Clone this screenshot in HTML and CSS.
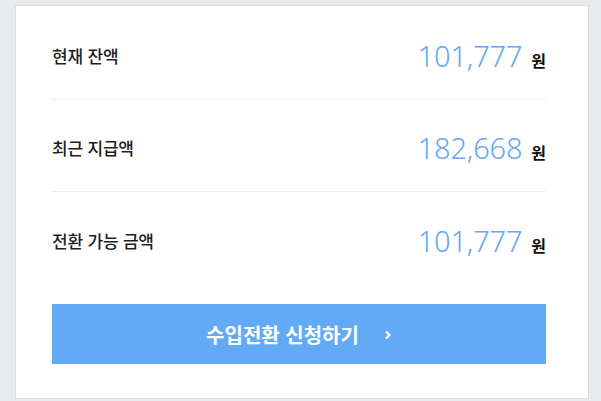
FILE: index.html
```html
<!DOCTYPE html>
<html lang="ko">
<head>
<meta charset="utf-8">
<link rel="stylesheet" href="styles.css">
</head>
<body>
<div class="card">
  <div class="row">
    <span class="label">현재 잔액</span>
    <span class="value"><span class="num">101,777</span><span class="unit">원</span></span>
  </div>
  <div class="row">
    <span class="label">최근 지급액</span>
    <span class="value"><span class="num">182,668</span><span class="unit">원</span></span>
  </div>
  <div class="row last">
    <span class="label">전환 가능 금액</span>
    <span class="value"><span class="num">101,777</span><span class="unit">원</span></span>
  </div>
  <button class="cta" type="button">
    <span>수입전환 신청하기</span>
    <svg class="chev" width="8" height="10" viewBox="0 0 8 10"><path d="M2 1.5 L5.5 5 L2 8.5" fill="none" stroke="#fff" stroke-width="2.2"/></svg>
  </button>
</div>
</body>
</html>
```
FILE: styles.css
```css
html, body { margin: 0; padding: 0; }
body {
  background: #e8ebee;
  width: 601px;
  height: 401px;
  font-family: "Noto Sans CJK KR", "Noto Sans", sans-serif;
  padding: 5px 12px 0 15px;
  box-sizing: border-box;
  overflow: hidden;
}
.card {
  background: #fff;
  border: 1px solid #d9dde1;
  width: 574px;
  height: 394px;
  box-sizing: border-box;
  padding: 2px 42px 0 36px;
  display: flex;
  flex-direction: column;
}
.row {
  height: 92px;
  display: flex;
  align-items: center;
  justify-content: space-between;
  border-bottom: 1px solid #eceef0;
  box-sizing: border-box;
  padding-top: 4px;
}
.row.last { border-bottom: none; }
.label {
  font-size: 17px;
  color: #1e1e1e;
  font-weight: 500;
  letter-spacing: -0.2px;
}
.value { display: flex; align-items: baseline; }
.num {
  font-family: "Noto Sans", sans-serif;
  font-size: 29px;
  color: #62a8f5;
  font-weight: 350;
  letter-spacing: -0.2px;
}
.unit {
  font-size: 16px;
  font-weight: 600;
  color: #111;
  margin-left: 9px;
}
.cta {
  margin-top: 20px;
  height: 60px;
  width: 494px;
  border: none;
  background: #62aaf5;
  color: #fff;
  font-family: "Noto Sans CJK KR", sans-serif;
  font-size: 20px;
  font-weight: 700;
  display: flex;
  align-items: center;
  justify-content: center;
  gap: 25px;
  padding: 0;
}
.chev { display: block; margin-top: 1px; }
```
